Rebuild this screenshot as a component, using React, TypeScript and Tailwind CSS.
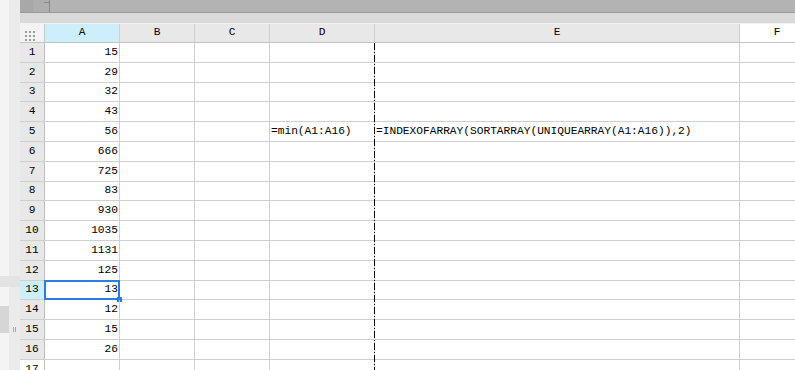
import React from "react";

const columns = [
  { label: "A", width: "w-[75px]", head: "bg-[#cdeefb]" },
  { label: "B", width: "w-[75px]", head: "bg-[#e8e8e8]" },
  { label: "C", width: "w-[75px]", head: "bg-[#e8e8e8]" },
  { label: "D", width: "w-[105px]", head: "bg-[#e8e8e8]" },
  { label: "E", width: "w-[365px]", head: "bg-[#e8e8e8]" },
  { label: "F", width: "w-[75px]", head: "bg-white" },
];

const values = [15, 29, 32, 43, 56, 666, 725, 83, 930, 1035, 1131, 125, 13, 12, 15, 26];

const texts: Record<number, Record<string, string>> = {
  5: {
    D: "=min(A1:A16)",
    E: "=INDEXOFARRAY(SORTARRAY(UNIQUEARRAY(A1:A16)),2)",
  },
};

function LeftRail() {
  return (
    <div className="flex shrink-0 h-full">
      <div className="w-[9px] flex flex-col">
        <div className="h-[276px] bg-[#f4f4f6]" />
        <div className="h-[11px] bg-[#e3e3e3]" />
        <div className="h-[19px] bg-[#f4f4f6]" />
        <div className="h-[27px] bg-[#d6d6d9]" />
        <div className="flex-1 bg-[#f4f4f6]" />
      </div>
      <div className="w-[11px] flex flex-col bg-[#ebebeb]">
        <div className="h-[276px]" />
        <div className="h-[11px] bg-[#e3e3e3]" />
        <div className="h-[40px]" />
        <div className="flex gap-[1px] pl-[4px]">
          <div className="w-px h-[5px] bg-[#a8a8a8]" />
          <div className="w-px h-[5px] bg-[#a8a8a8]" />
        </div>
      </div>
    </div>
  );
}

function TopBar() {
  return (
    <div className="h-[13px] shrink-0 flex border-b border-[#999999] bg-[#b3b3b3]">
      <div className="w-[13px] bg-[#a8a8a8]" />
      <div className="w-[16px] bg-[#aeaeae] flex justify-end pt-[2px]">
        <div className="w-[5px] h-px bg-[#8a8a8a]" />
      </div>
      <div className="w-px bg-[#8a8a8a]" />
    </div>
  );
}

function HeaderRow() {
  return (
    <div className="h-[20px] shrink-0 flex border-b border-[#c4c4c4] border-t border-t-[#f2f2f2]">
      <div className="w-[25px] shrink-0 bg-[#f3f3f3] border-r border-[#c8c8c8] pl-[5px] pt-[7px]">
        <div className="grid grid-cols-3 gap-[2px] w-[10px]">
          {Array.from({ length: 9 }).map((_, i) => (
            <div key={i} className="w-[2px] h-[2px] bg-[#9a9a9a]" />
          ))}
        </div>
      </div>
      {columns.map((c) => (
        <div
          key={c.label}
          className={`${c.width} ${c.head} shrink-0 border-r border-[#cfcfcf] flex items-center justify-center leading-none`}
        >
          {c.label}
        </div>
      ))}
    </div>
  );
}

function Row({ n }: { n: number }) {
  const value = values[n - 1];
  const selected = n === 13;
  const rowText = texts[n] ?? {};
  return (
    <div className="h-[19.8px] shrink-0 flex border-b border-[#cfcfcf]">
      <div
        className={`w-[25px] shrink-0 border-r border-[#bdbdbd] flex items-center justify-center leading-none ${
          selected ? "bg-[#cdeefb]" : n > 16 ? "bg-white" : "bg-[#e8e8e8]"
        }`}
      >
        {n}
      </div>
      {columns.map((c) => (
        <div
          key={c.label}
          className={`${c.width} shrink-0 border-r border-[#cfcfcf] flex items-center leading-none whitespace-nowrap relative ${
            c.label === "A" ? "justify-end pr-[1px]" : "pl-[1px]"
          }`}
        >
          {c.label === "A" && value !== undefined ? value : rowText[c.label]}
          {c.label === "A" && selected && (
            <div className="absolute -inset-[1px] border-2 border-[#2a7ee2]">
              <div className="absolute -right-[4px] -bottom-[4px] w-[5px] h-[5px] bg-[#2a7ee2]" />
            </div>
          )}
        </div>
      ))}
    </div>
  );
}

export default function App() {
  return (
    <div className="w-[795px] h-[370px] overflow-hidden flex bg-white font-['Liberation_Mono',monospace] text-[11.2px] text-black">
      <LeftRail />
      <div className="flex-1 flex flex-col min-w-0 overflow-hidden">
        <TopBar />
        <div className="h-[10px] shrink-0 bg-[#dadada]" />
        <HeaderRow />
        <div className="relative flex flex-col flex-1">
          {Array.from({ length: 17 }).map((_, i) => (
            <Row key={i} n={i + 1} />
          ))}
          <div className="absolute left-[354px] top-0 bottom-0 w-px bg-[repeating-linear-gradient(to_bottom,#000_0px,#000_7px,transparent_7px,transparent_9px,#000_9px,#000_10px,transparent_10px,transparent_12px)]" />
        </div>
      </div>
    </div>
  );
}
